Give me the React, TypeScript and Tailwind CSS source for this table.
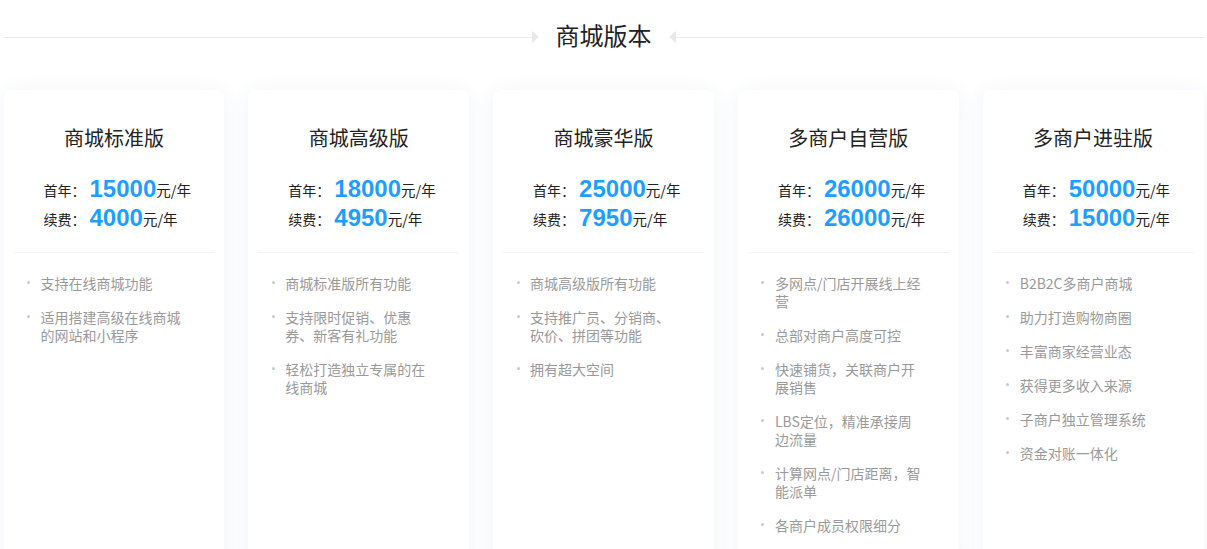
import React from 'react';

type Plan = {
  name: string;
  first: string;
  renew: string;
  features: string[];
};

const plans: Plan[] = [
  {
    name: '商城标准版',
    first: '15000',
    renew: '4000',
    features: ['支持在线商城功能', '适用搭建高级在线商城的网站和小程序'],
  },
  {
    name: '商城高级版',
    first: '18000',
    renew: '4950',
    features: ['商城标准版所有功能', '支持限时促销、优惠券、新客有礼功能', '轻松打造独立专属的在线商城'],
  },
  {
    name: '商城豪华版',
    first: '25000',
    renew: '7950',
    features: ['商城高级版所有功能', '支持推广员、分销商、砍价、拼团等功能', '拥有超大空间'],
  },
  {
    name: '多商户自营版',
    first: '26000',
    renew: '26000',
    features: [
      '多网点/门店开展线上经营',
      '总部对商户高度可控',
      '快速铺货，关联商户开展销售',
      'LBS定位，精准承接周边流量',
      '计算网点/门店距离，智能派单',
      '各商户成员权限细分',
    ],
  },
  {
    name: '多商户进驻版',
    first: '50000',
    renew: '15000',
    features: [
      'B2B2C多商户商城',
      '助力打造购物商圈',
      '丰富商家经营业态',
      '获得更多收入来源',
      '子商户独立管理系统',
      '资金对账一体化',
    ],
  },
];

const PriceRow: React.FC<{ label: string; value: string }> = ({ label, value }) => (
  <div className="flex items-center h-[29px] text-[14px] leading-[20px] text-[#222]">
    <span className="mr-[4px] pt-[3px]">{label}：</span>
    <span className="font-['Liberation_Sans',sans-serif] text-[24px] font-bold text-[#1E9FFF] leading-[26px]">
      {value}
    </span>
    <span className="text-[14.5px] pt-[3px]">元/年</span>
  </div>
);

const PlanCard: React.FC<{ plan: Plan }> = ({ plan }) => (
  <div className="bg-white rounded-[8px] shadow-[0_2px_20px_rgba(20,70,130,0.07)] h-[480px]">
    <div className="pt-[34px] text-center text-[20px] leading-[28px] text-[#222]">{plan.name}</div>
    <div className="mt-[22px] pl-[40px] flex flex-col">
      <PriceRow label="首年" value={plan.first} />
      <PriceRow label="续费" value={plan.renew} />
    </div>
    <div className="mx-[10px] mt-[20px] border-t border-[#f2f2f2]" />
    <ul className="pt-[21px] flex flex-col gap-[16px]">
      {plan.features.map((f) => (
        <li key={f} className="flex text-[14px] leading-[18px] text-[#999]">
          <span className="w-[37px] flex justify-center shrink-0 pt-[7px] pl-[13px]">
            <span className="block w-[3px] h-[3px] rounded-full bg-[#c8c8c8]" />
          </span>
          <span className="w-[150px]">{f}</span>
        </li>
      ))}
    </ul>
  </div>
);

const App: React.FC = () => {
  return (
    <div
      className="bg-white min-h-[549px] overflow-hidden"
      style={{ fontFamily: '"Noto Sans CJK SC", "Noto Sans", sans-serif' }}
    >
      <div className="w-[1200px] mx-auto">
        <div className="flex items-center h-[48px] mt-[13px]">
          <div className="flex-1 border-t border-[#ececec]" />
          <svg width="7" height="12" viewBox="0 0 7 12" className="block">
            <path d="M0 0 L7 6 L0 12 Z" fill="#e8e8e8" />
          </svg>
          <h2 className="px-[17px] pb-[4px] text-[24px] leading-[32px] text-[#222] font-normal">商城版本</h2>
          <svg width="7" height="12" viewBox="0 0 7 12" className="block">
            <path d="M7 0 L0 6 L7 12 Z" fill="#e8e8e8" />
          </svg>
          <div className="flex-1 border-t border-[#ececec]" />
        </div>
        <div className="grid grid-cols-5 gap-[24px] mt-[29px]">
          {plans.map((p) => (
            <PlanCard key={p.name} plan={p} />
          ))}
        </div>
      </div>
    </div>
  );
};

export default App;
